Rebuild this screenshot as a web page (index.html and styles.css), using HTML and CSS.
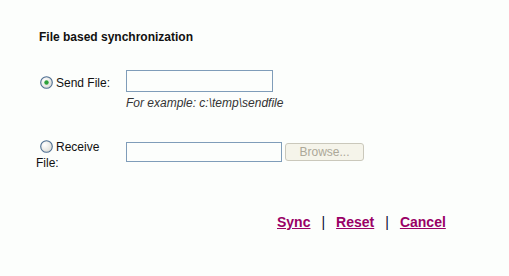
FILE: index.html
```html
<!DOCTYPE html>
<html>
<head>
<meta charset="utf-8">
<link rel="stylesheet" href="styles.css">
</head>
<body>
<div class="page">
  <div class="title">File based synchronization</div>

  <div class="row row-send">
    <label class="label">
      <span class="radio"><svg width="13" height="13" viewBox="0 0 13 13"><defs><radialGradient id="rg1" cx="0.35" cy="0.35" r="0.8"><stop offset="0" stop-color="#ffffff"/><stop offset="1" stop-color="#d8d8d2"/></radialGradient></defs><circle cx="6.5" cy="6.5" r="5.8" fill="url(#rg1)" stroke="#4d6e92" stroke-width="1.1"/><circle cx="6.5" cy="6.5" r="2.2" fill="#2da13a"/></svg></span>Send File:
    </label>
    <div class="field">
      <input class="text-input send-input" type="text">
      <div class="example">For example: c:\temp\sendfile</div>
    </div>
  </div>

  <div class="row row-receive">
    <label class="label">
      <span class="radio"><svg width="13" height="13" viewBox="0 0 13 13"><defs><radialGradient id="rg2" cx="0.35" cy="0.35" r="0.8"><stop offset="0" stop-color="#ffffff"/><stop offset="1" stop-color="#d8d8d2"/></radialGradient></defs><circle cx="6.5" cy="6.5" r="5.8" fill="url(#rg2)" stroke="#4d6e92" stroke-width="1.1"/></svg></span>Receive File:
    </label>
    <div class="field field-inline">
      <input class="text-input receive-input" type="text">
      <button class="browse" disabled>Browse...</button>
    </div>
  </div>

  <div class="actions">
    <a href="#" class="action">Sync</a>
    <span class="sep">|</span>
    <a href="#" class="action">Reset</a>
    <span class="sep">|</span>
    <a href="#" class="action">Cancel</a>
  </div>
</div>
</body>
</html>
```

FILE: styles.css
```css
html, body {
  margin: 0;
  padding: 0;
  background: #fcfefc;
}

body {
  font-family: "Liberation Sans", Arial, sans-serif;
  font-size: 12px;
  color: #000;
  width: 509px;
  height: 276px;
  overflow: hidden;
}

.page {
  padding: 30px 0 0 36px;
}

.title {
  margin-left: 3px;
  font-weight: bold;
  line-height: 14px;
  color: #111;
}

.row {
  display: flex;
  align-items: flex-start;
}

.row-send {
  margin-top: 26px;
}

.row-receive {
  margin-top: 29px;
}

.label {
  width: 86px;
  margin-right: 4px;
  line-height: 16px;
  color: #111;
}

.row-send .label {
  margin-top: 5px;
}

.radio {
  display: inline-block;
  width: 13px;
  height: 13px;
  margin: 0 3px 0 4px;
  vertical-align: -2px;
}

.radio svg {
  display: block;
}

.field {
  display: flex;
  flex-direction: column;
}

.field-inline {
  flex-direction: row;
  align-items: flex-start;
  margin-top: 3px;
}

.text-input {
  box-sizing: border-box;
  margin: 0;
  padding: 1px 2px;
  border: 1px solid #7f9db9;
  background: #fcfefc;
  font-family: "Liberation Sans", Arial, sans-serif;
  font-size: 12px;
  outline: none;
}

.send-input {
  width: 147px;
  height: 22px;
}

.receive-input {
  width: 156px;
  height: 20px;
}

.example {
  margin-top: 4px;
  line-height: 14px;
  font-style: italic;
  color: #333;
}

.browse {
  box-sizing: border-box;
  width: 79px;
  height: 18px;
  margin: 1px 0 0 3px;
  padding: 0;
  border: 1px solid #cac8bb;
  border-radius: 3px;
  background: #f5f4ea;
  color: #aca899;
  font-family: "Liberation Sans", Arial, sans-serif;
  font-size: 12px;
  line-height: 16px;
}

.actions {
  display: flex;
  align-items: baseline;
  gap: 11px;
  margin-top: 43px;
  padding-left: 241px;
  font-size: 14px;
  line-height: 16px;
}

.action {
  font-weight: bold;
  color: #990066;
  text-decoration: underline;
}

.sep {
  color: #0a0a30;
}
```
